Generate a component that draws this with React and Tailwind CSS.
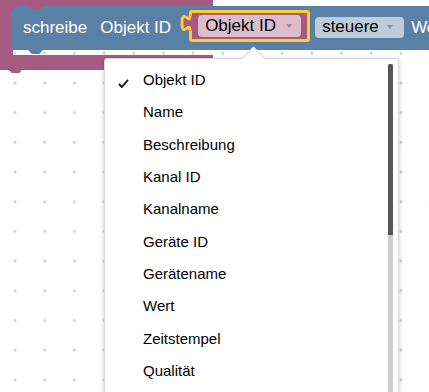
export default function App() {
  const items = [
    "Objekt ID",
    "Name",
    "Beschreibung",
    "Kanal ID",
    "Kanalname",
    "Geräte ID",
    "Gerätename",
    "Wert",
    "Zeitstempel",
    "Qualität",
  ];
  return (
    <div className="relative w-[429px] h-[392px] overflow-hidden bg-white bg-[radial-gradient(circle,#cfcfcf_1.2px,transparent_1.8px)] bg-size-[29.7px_29.7px] bg-position-[0.15px_8.75px] font-['Liberation_Sans',Arial,sans-serif]">
      {/* purple C-block behind */}
      <div className="absolute left-0 top-0 w-[213px] h-[10px] bg-[#a55b80]" />
      <div className="absolute left-0 top-0 w-[13px] h-[70px] bg-[#a55b80]" />
      <div className="absolute left-0 top-[55px] w-[213px] h-[15px] bg-[#a55b80] rounded-br-[3px]" />
      <div className="absolute left-[8px] top-[69px] w-[15px] h-[4px] bg-[#a55b80] [clip-path:polygon(0_0,100%_0,75%_100%,25%_100%)]" />

      {/* blue block */}
      <div className="absolute left-[11px] top-[6px] w-[440px] h-[44px] bg-[#5b80a5] rounded-tl-[8px] rounded-bl-[3px] flex items-center pl-[12px] text-[17px] text-white whitespace-nowrap">
        <div className="absolute left-[17px] top-0 w-[15px] h-[4px] bg-[#a55b80] [clip-path:polygon(0_0,100%_0,75%_100%,25%_100%)]" />
        <div className="absolute left-[17px] top-[44px] w-[15px] h-[4px] bg-[#5b80a5] [clip-path:polygon(0_0,100%_0,75%_100%,25%_100%)]" />
        <span>schreibe</span>
        <span className="ml-[13px]">Objekt ID</span>
        <div className="relative ml-[18px] mb-[4px] w-[121px] h-[32px] border-[3px] border-[#ffcc33] bg-[#a55b80] rounded-[3px] flex items-center pl-[6px] shrink-0">
          <svg
            className="absolute left-[-12px] top-[1px] overflow-visible"
            width="14"
            height="18"
            viewBox="0 0 14 18"
          >
            <rect x="8.5" y="1.5" width="4.5" height="15" fill="#a55b80" />
            <path
              d="M10 1.5 c0 10 -8 -8 -8 7.5 s8 -2.5 8 7.5"
              fill="#a55b80"
              stroke="#ffcc33"
              strokeWidth="3"
            />
          </svg>
          <div className="w-[103px] h-[22px] bg-[#dbbdcc] rounded-[4px] flex items-center justify-between pl-[7px] pr-[9px] text-black">
            <span>Objekt ID</span>
            <span className="w-0 h-0 border-l-[3.5px] border-r-[3.5px] border-t-[4px] border-l-transparent border-r-transparent border-t-[#a98799]" />
          </div>
        </div>
        <div className="ml-[5px] mb-[2px] w-[89px] h-[21px] bg-[#bdccdb] rounded-[4px] flex items-center justify-between pl-[7px] pr-[11px] text-black shrink-0">
          <span>steuere</span>
          <span className="w-0 h-0 border-l-[3.5px] border-r-[3.5px] border-t-[4px] border-l-transparent border-r-transparent border-t-[#7b91aa]" />
        </div>
        <span className="ml-[7px]">Wert</span>
      </div>

      {/* dropdown menu */}
      <div className="absolute left-[104px] top-[58px] w-[295px] h-[360px] bg-white border border-[#d9d9d9] rounded-[3px] shadow-[0_1px_4px_rgba(0,0,0,0.22)] pt-[5px]">
        <div className="absolute left-[140px] top-[-9px] w-[17px] h-[17px] rotate-45 bg-white border-l border-t border-[#d9d9d9]" />
        <div className="relative">
          {items.map((it, i) => (
            <div
              key={it}
              className="relative h-[32.33px] flex items-center pl-[38px] text-[15px] text-black"
            >
              {i === 0 && (
                <svg
                  className="absolute left-[13px] top-[15px]"
                  width="11"
                  height="9"
                  viewBox="0 0 11 9"
                >
                  <path
                    d="M1 5 L3.8 8 L10 0.8"
                    fill="none"
                    stroke="#1a1a1a"
                    strokeWidth="1.9"
                  />
                </svg>
              )}
              <span>{it}</span>
            </div>
          ))}
        </div>
        <div className="absolute right-[5px] top-[5px] bottom-0 w-[5px] bg-[#cdcdcd]">
          <div className="w-full h-[171px] bg-[#565656] rounded-t-[2px]" />
        </div>
      </div>
    </div>
  );
}
